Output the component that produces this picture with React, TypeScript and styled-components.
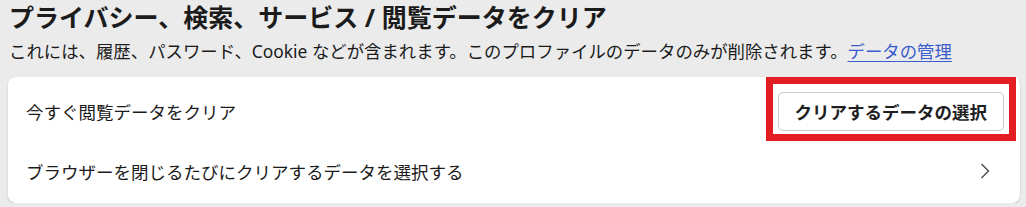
import React from "react";
import styled, { createGlobalStyle } from "styled-components";

const Global = createGlobalStyle`
  html, body {
    margin: 0;
    padding: 0;
    background: #ebebeb;
    font-family: "Noto Sans", "Noto Sans CJK JP", sans-serif;
    color: #1b1b1b;
  }
`;

const Page = styled.div`
  padding: 0 6px 0 8px;
  display: flex;
  flex-direction: column;
`;

const Title = styled.h1`
  margin: 0;
  font-size: 25px;
  line-height: 34px;
  font-weight: 700;
  padding-left: 1px;
`;

const Subtitle = styled.p`
  margin: 4px 0 0;
  font-size: 17.4px;
  line-height: 26px;
  padding-left: 1px;
`;

const Link = styled.a`
  color: #3a5ccc;
  text-decoration: underline;
  text-underline-offset: 3px;
`;

const Card = styled.div`
  margin-top: 13px;
  background: #ffffff;
  border-radius: 8px;
  box-shadow: 0 1px 2px rgba(0, 0, 0, 0.18);
  padding-bottom: 7px;
  display: flex;
  flex-direction: column;
`;

const Row = styled.div<{ $h: number; $pr: number }>`
  display: flex;
  align-items: center;
  justify-content: space-between;
  height: ${(p) => p.$h}px;
  padding: 0 ${(p) => p.$pr}px 0 18px;
  font-size: 17.5px;
`;

const ButtonWrap = styled.div`
  position: relative;
  display: flex;
`;

const Button = styled.button`
  font-family: inherit;
  font-size: 17.5px;
  font-weight: 700;
  color: #1f1f1f;
  background: #ffffff;
  border: 1px solid #c9c9c9;
  border-radius: 5px;
  height: 39px;
  padding: 0 16px;
  cursor: pointer;
`;

const Highlight = styled.div`
  position: absolute;
  left: -12px;
  top: -15px;
  right: -12px;
  bottom: -10px;
  border: 7px solid #e21d23;
  pointer-events: none;
`;

const Chevron = () => (
  <svg width="20" height="20" viewBox="0 0 20 20" fill="none">
    <path d="M6.5 3 L13.5 10 L6.5 17" stroke="#4a4a4a" strokeWidth="1.4" />
  </svg>
);

export default function App() {
  return (
    <>
      <Global />
      <Page>
        <Title>プライバシー、検索、サービス / 閲覧データをクリア</Title>
        <Subtitle>
          これには、履歴、パスワード、Cookie などが含まれます。このプロファイルのデータのみが削除されます。
          <Link href="#">データの管理</Link>
        </Subtitle>
        <Card>
          <Row $h={69} $pr={16}>
            <span>今すぐ閲覧データをクリア</span>
            <ButtonWrap>
              <Button>クリアするデータの選択</Button>
              <Highlight />
            </ButtonWrap>
          </Row>
          <Row $h={50} $pr={25}>
            <span>ブラウザーを閉じるたびにクリアするデータを選択する</span>
            <Chevron />
          </Row>
        </Card>
      </Page>
    </>
  );
}
